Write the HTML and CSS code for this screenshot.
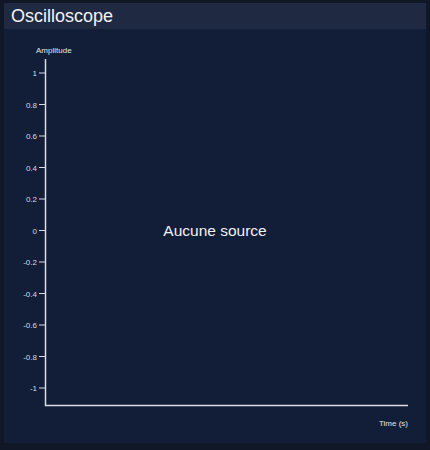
FILE: index.html
```html
<!DOCTYPE html>
<html lang="en">
  <head>
    <meta charset="utf-8" />
    <title>Oscilloscope</title>
    <link rel="stylesheet" href="styles.css">
  </head>
  <body>
    <section class="scope-panel">
      <header class="scope-header">
        <h1 class="scope-title">Oscilloscope</h1>
      </header>
      <div class="scope-body">
        <svg class="scope-chart" width="422" height="414" viewBox="4 29 422 414">
          <text class="axis-name" x="36" y="53">Amplitude</text>
          <g class="ticks">
            <line x1="39" y1="73" x2="45" y2="73" />
            <line x1="39" y1="104.5" x2="45" y2="104.5" />
            <line x1="39" y1="136" x2="45" y2="136" />
            <line x1="39" y1="167.5" x2="45" y2="167.5" />
            <line x1="39" y1="199" x2="45" y2="199" />
            <line x1="39" y1="230.5" x2="45" y2="230.5" />
            <line x1="39" y1="262" x2="45" y2="262" />
            <line x1="39" y1="293.5" x2="45" y2="293.5" />
            <line x1="39" y1="325" x2="45" y2="325" />
            <line x1="39" y1="356.5" x2="45" y2="356.5" />
            <line x1="39" y1="388" x2="45" y2="388" />
          </g>
          <g class="tick-labels">
            <text x="37" y="76">1</text>
            <text x="37" y="107.5">0.8</text>
            <text x="37" y="139">0.6</text>
            <text x="37" y="170.5">0.4</text>
            <text x="37" y="202">0.2</text>
            <text x="37" y="233.5">0</text>
            <text x="37" y="265">-0.2</text>
            <text x="37" y="296.5">-0.4</text>
            <text x="37" y="328">-0.6</text>
            <text x="37" y="359.5">-0.8</text>
            <text x="37" y="391">-1</text>
          </g>
          <path class="axis" d="M45.5 59 V405.5 H408" />
          <text class="axis-name end" x="408" y="425.5">Time (s)</text>
          <text class="empty-msg" x="215" y="236">Aucune source</text>
        </svg>
      </div>
    </section>
  </body>
</html>
```

FILE: styles.css
```css
html,
body {
  margin: 0;
  padding: 0;
  background-color: #101828;
  font-family: "Liberation Sans", Arial, sans-serif;
}
body {
  width: 430px;
  height: 450px;
  padding: 3px 4px 0 4px;
  box-sizing: border-box;
}

.scope-panel {
  width: 422px;
  height: 440px;
  background-color: #121d38;
  display: flex;
  flex-direction: column;
}
.scope-header {
  height: 26px;
  background-color: #1f2a42;
  display: flex;
  align-items: center;
  padding: 0 7px;
}
.scope-title {
  margin: 0;
  font-size: 18px;
  font-weight: normal;
  color: #f1f3f7;
  line-height: 1;
}
.scope-body {
  flex: 1;
}
.scope-chart {
  display: block;
}

.axis {
  fill: none;
  stroke: #d9dce3;
  stroke-width: 1.5;
}
.ticks line {
  stroke: #d9dce3;
  stroke-width: 1;
}
.tick-labels text {
  fill: #d9dce3;
  font-size: 8px;
  text-anchor: end;
}
.axis-name {
  fill: #e4e7ec;
  font-size: 8px;
}
.axis-name.end {
  text-anchor: end;
}
.empty-msg {
  fill: #eef0f4;
  font-size: 15.5px;
  text-anchor: middle;
}
```
